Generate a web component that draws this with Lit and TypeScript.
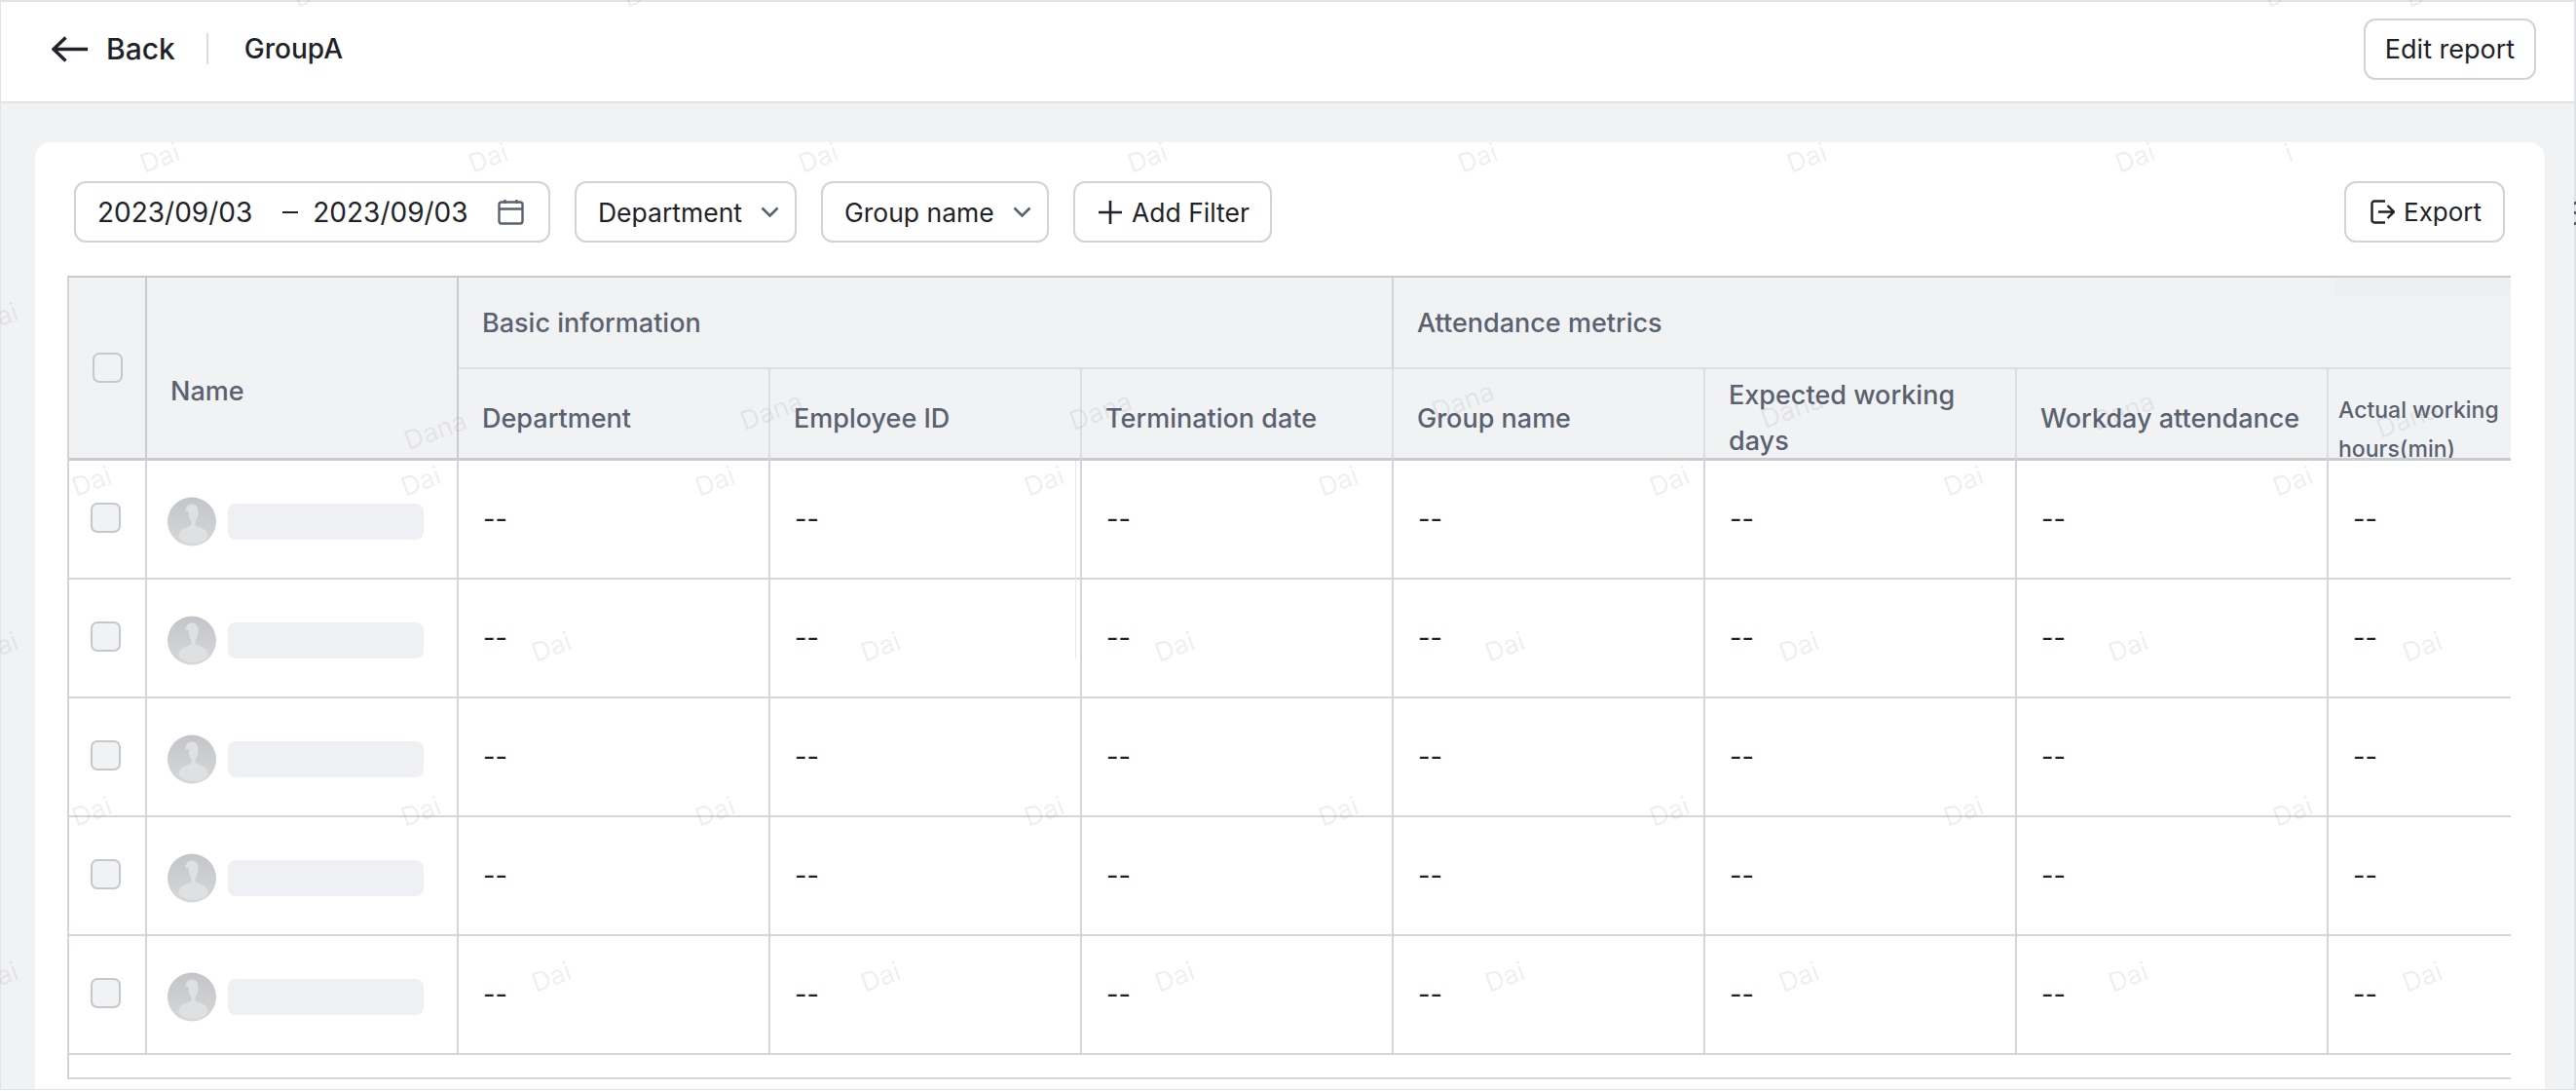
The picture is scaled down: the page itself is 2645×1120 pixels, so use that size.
import { LitElement, html, css, svg } from 'lit';
import { customElement } from 'lit/decorators.js';

const subHeads = [
  'Department',
  'Employee ID',
  'Termination date',
  'Group name',
  'Expected working days',
  'Workday attendance',
  'Actual working hours(min)',
];

// watermark centres in page pixels
const xsA = [94, 432, 734, 1072, 1374, 1714, 2016, 2354];
const xsB = [-2, 566, 904, 1206, 1545, 1847, 2185, 2487];
const marks: [string, number, number][] = [
  ...[164, 501, 840, 1178, 1517, 1855, 2192].map((x): [string, number, number] => ['Dai', x, 162]),
  ...xsA.map((x): [string, number, number] => ['Dai', x, 494]),
  ...xsB.map((x): [string, number, number] => ['Dai', x, 664]),
  ...xsA.map((x): [string, number, number] => ['Dai', x, 833]),
  ...xsB.map((x): [string, number, number] => ['Dai', x, 1003]),
  ['Dana', 447, 442],
  ['Dana', 792, 422],
  ['Dana', 1130, 422],
  ['Dana', 1502, 412],
  ['Dana', 1840, 420],
  ['Dana', 2180, 422],
  ['Dana', 2472, 430],
  ['Dai', -2, 326],
  ['i', 2350, 157],
  ['Dai', 321, -8],
  ['Dai', 660, -8],
  ['Dai', 2345, -8],
  ['Dai', 2490, -8],
];

// bits of the next panel showing at the right edge
const edgeDots = [207, 217, 228];

const chevron = html`<svg class="chev" width="19" height="11" viewBox="0 0 19 11" fill="none">
  <path d="M1.500 1.500l8 8 8-8" stroke="#5a6270" stroke-width="2.6" />
</svg>`;

const avatar = svg`<svg class="avatar" width="50" height="51" viewBox="0 0 50 51">
  <defs>
    <linearGradient id="av" x1="0" y1="0" x2="0" y2="1">
      <stop offset="0" stop-color="#c3c5c8" />
      <stop offset="1" stop-color="#d5d7d9" />
    </linearGradient>
  </defs>
  <circle cx="25" cy="25.5" r="25" fill="url(#av)" />
  <path d="M18.5 15c0-5 2.8-7.5 6.5-7.5s6.500 2.500 6.500 7.500c0 4.500-1 8-3 10.500v3.500c1 2 9 3 11.500 6.500 1 1.500 1.500 4 1.500 6.500-4 4-9 6-15 6s-11-2-15-6c0-2.500.5-5 1.500-6.500 2.500-3.500 10.500-4.500 11.500-6.500v-3.500c-2-2.500-3-6-3-10.500z" fill="#dfe0e2" />
</svg>`;

@customElement('app-root')
export class AppRoot extends LitElement {
  static styles = css`
    :host {
      display: block;
      font-family: Inter, 'Liberation Sans', sans-serif;
      color: #1f2329;
    }

    .page {
      position: relative;
      width: 2645px;
      height: 1120px;
      overflow: hidden;
      background: #fff;
    }

    .frame {
      box-sizing: border-box;
      height: 1119px;
      display: flex;
      flex-direction: column;
      background: #f1f2f4;
      border: 1px solid #e2e3e7;
      border-top-width: 2px;
      border-right-width: 2px;
    }

    .topbar {
      box-sizing: border-box;
      flex: none;
      height: 104px;
      display: flex;
      align-items: center;
      padding: 0 39px 6px 52px;
      background: #fff;
      border-bottom: 2px solid #e2e3e7;
    }

    .back {
      display: flex;
      align-items: center;
      gap: 19px;
      font-size: 30px;
      font-weight: 500;
    }

    .divider {
      width: 2px;
      height: 32px;
      margin: 0 37px 0 32px;
      background: #dcdee2;
    }

    .title {
      font-size: 28px;
      font-weight: 500;
      flex: 1;
    }

    .btn {
      box-sizing: border-box;
      flex: none;
      height: 63px;
      display: inline-flex;
      align-items: center;
      background: #fff;
      border: 2px solid #d0d3d8;
      border-radius: 12px;
      font-size: 27px;
      white-space: nowrap;
    }

    .edit {
      width: 177px;
      justify-content: center;
    }

    .main {
      flex: 1;
      min-height: 0;
      padding: 40px 30px 0 35px;
    }

    .card {
      box-sizing: border-box;
      height: 100%;
      padding: 40px 0 0 40px;
      background: #fff;
      border-radius: 16px 16px 0 0;
    }

    .toolbar {
      display: flex;
      gap: 25px;
      margin-right: 41px;
    }

    .date {
      width: 489px;
      padding-left: 22px;
      font-size: 28px;
    }

    .date .dash {
      width: 16px;
      height: 2px;
      margin: 0 15px 0 31px;
      background: #1f2329;
    }

    .date svg {
      margin-left: 30px;
    }

    .select {
      padding-left: 22px;
      font-size: 26.5px;
    }

    .select .chev {
      margin-left: 19px;
    }

    .dept {
      width: 228px;
    }

    .groupname {
      width: 234px;
    }

    .add {
      width: 204px;
      padding-left: 24px;
      gap: 10px;
      font-size: 26.5px;
    }

    .export {
      width: 165px;
      margin-left: auto;
      padding-left: 25px;
      gap: 9px;
      font-size: 26px;
    }

    .table {
      width: 2509px;
      height: 825px;
      margin: 34px 0 0 -7px;
      overflow: hidden;
      border-top: 2px solid #c9cbd0;
      border-left: 2px solid #d3d4d7;
      border-bottom: 2px solid #d6d7d9;
      box-sizing: border-box;
    }

    .grid {
      display: grid;
      grid-template-columns: 80px repeat(9, 320px);
      grid-template-rows: 94px 94px repeat(5, 122px);
      width: 2960px;
    }

    .th {
      box-sizing: border-box;
      display: flex;
      align-items: center;
      background: #f1f2f4;
      color: #5a6270;
      font-size: 27px;
      font-weight: 500;
      line-height: 47px;
      overflow: hidden;
    }

    .corner {
      grid-row: span 2;
      border-right: 2px solid #c9cbd0;
      border-bottom: 3px solid #c9cbd0;
    }

    .check-head {
      justify-content: center;
    }

    .name-head {
      padding: 48px 0 0 24px;
    }

    .group {
      padding: 0 0 0 24px;
      border-bottom: 2px solid #dcdee1;
    }

    .group.basic {
      grid-column: span 3;
      border-right: 2px solid #d2d4d8;
    }

    .group.metrics {
      grid-column: span 5;
    }

    .sub {
      padding: 10px 12px 0 24px;
      border-right: 2px solid #dcdee1;
      border-bottom: 3px solid #c9cbd0;
    }

    .sub.wrap {
      align-items: flex-start;
      padding-top: 3px;
    }

    .sub.small {
      font-size: 23px;
      line-height: 40px;
      padding: 22px 0 0 10px;
      align-items: flex-start;
    }

    .sub.small span {
      max-width: 180px;
    }

    .cell {
      box-sizing: border-box;
      display: flex;
      align-items: center;
      border-right: 2px solid #d5d6d8;
      border-bottom: 2px solid #d5d6d8;
      padding: 0 0 2px 25px;
      font-size: 27px;
      color: #1f2329;
    }

    .cell.check {
      justify-content: center;
      padding: 0 4px 3px 0;
    }

    .cell.person {
      gap: 12px;
      padding: 4px 0 0 21px;
    }

    .box {
      box-sizing: border-box;
      display: block;
      width: 31px;
      height: 31px;
      background: #f1f2f4;
      border: 2px solid #c5c8ce;
      border-radius: 7px;
    }

    .bar {
      width: 201px;
      height: 37px;
      border-radius: 8px;
      background: #eff0f3;
    }

    .avatar {
      flex: none;
    }

    .shade {
      position: absolute;
      left: 2397px;
      top: 285px;
      width: 181px;
      height: 18px;
      background: #eeeff2;
    }

    .seam {
      position: absolute;
      left: 1104px;
      top: 473px;
      width: 1px;
      height: 203px;
      background: #e6e7e9;
    }

    .edge {
      position: absolute;
      left: 2643px;
      width: 2px;
      height: 3px;
      background: #555a63;
    }

    .mark {
      position: absolute;
      font-size: 27px;
      color: rgba(70, 76, 90, 0.09);
      transform: translate(-50%, -50%) rotate(-20deg);
      pointer-events: none;
      white-space: nowrap;
    }
  `;

  render() {
    const rows = [0, 1, 2, 3, 4];
    const cols = [0, 1, 2, 3, 4, 5, 6, 7];
    return html`
      <div class="page">
        <div class="frame">
          <div class="topbar">
            <div class="back">
              <svg width="37" height="27" viewBox="0 0 37 27" fill="none">
                <path d="M37 13.500H2M14.500 1.500L2 13.500l12.500 12" stroke="#1f2329" stroke-width="3.400" />
              </svg>
              Back
            </div>
            <div class="divider"></div>
            <div class="title">GroupA</div>
            <div class="btn edit">Edit report</div>
          </div>
          <div class="main">
            <div class="card">
              <div class="toolbar">
                <div class="btn date">
                  2023/09/03
                  <span class="dash"></span>
                  2023/09/03
                  <svg width="27" height="27" viewBox="0 0 27 27" fill="none" stroke="#5a6270" stroke-width="2.400">
                    <rect x="1.500" y="3.500" width="24" height="22" rx="2.500" />
                    <path d="M1.500 10.500h24M7.500 1v4M19.500 1v4" />
                  </svg>
                </div>
                <div class="btn select dept">Department${chevron}</div>
                <div class="btn select groupname">Group name${chevron}</div>
                <div class="btn add">
                  <svg width="24" height="24" viewBox="0 0 24 24" fill="none" stroke="#1f2329" stroke-width="2.600">
                    <path d="M12 0v24M0 12h24" />
                  </svg>
                  Add Filter
                </div>
                <div class="btn export">
                  <svg width="25" height="25" viewBox="0 0 25 25" fill="none" stroke="#1f2329" stroke-width="2.400">
                    <path d="M15 1.500H4a2.500 2.500 0 0 0-2.500 2.500v17A2.500 2.500 0 0 0 4 23.500h11" />
                    <path d="M8 12.500h16M17.500 6l6.500 6.500-6.500 6.500" />
                  </svg>
                  Export
                </div>
              </div>
              <div class="table">
                <div class="grid">
                  <div class="th corner check-head"><span class="box"></span></div>
                  <div class="th corner name-head">Name</div>
                  <div class="th group basic">Basic information</div>
                  <div class="th group metrics">Attendance metrics</div>
                  ${subHeads.map(
                    (h) => html`<div
                      class="th sub ${h === 'Expected working days' ? 'wrap' : ''} ${h.startsWith('Actual') ? 'small' : ''}"
                    >
                      <span>${h}</span>
                    </div>`,
                  )}
                  <div class="th sub"></div>
                  ${rows.map(
                    () => html`
                      <div class="cell check"><span class="box"></span></div>
                      <div class="cell person">${avatar}<div class="bar"></div></div>
                      ${cols.map(() => html`<div class="cell">--</div>`)}
                    `,
                  )}
                </div>
              </div>
            </div>
          </div>
        </div>
        <div class="shade"></div>
        <div class="seam"></div>
        ${edgeDots.map((y) => html`<span class="edge" style="top:${y}px"></span>`)}
        ${marks.map(
          ([t, x, y]) => html`<span class="mark" style="left:${x}px;top:${y}px">${t}</span>`,
        )}
      </div>
    `;
  }
}
